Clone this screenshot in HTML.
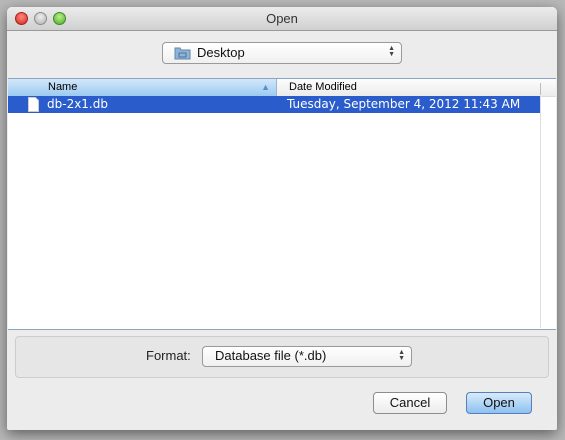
<!DOCTYPE html>
<html><head><style>
body{margin:0;width:565px;height:440px;background:#b9b9b9;position:relative;overflow:hidden;font-family:"Liberation Sans",sans-serif;}
.win{position:absolute;left:7px;top:7px;width:550px;height:423px;background:#ececec;border-radius:5px 5px 2px 2px;box-shadow:0 4px 14px rgba(0,0,0,.5);overflow:hidden;}
.title{height:23px;background:linear-gradient(#ececec,#d0d0d0);border-bottom:1px solid #9a9a9a;text-align:center;font-size:13px;line-height:24px;color:#333;}
.dot{position:absolute;top:5px;width:12px;height:12px;border-radius:50%;}
.pop{position:absolute;background:linear-gradient(#fff,#f0f0f0);border:1px solid #9a9a9a;border-radius:4px;font-size:13px;color:#111;}
.arr{position:absolute;right:6px;top:3px;font-size:7px;line-height:6px;color:#444;}
.list{position:absolute;left:1px;top:71px;width:548px;height:250px;background:#fff;border:1px solid #8aa4c4;border-width:1px 0;}
.btn{position:absolute;top:385px;height:20px;border:1px solid #8d8d8d;border-radius:4px;background:linear-gradient(#fff,#ececec);font-size:13px;text-align:center;line-height:20px;color:#111;}
</style></head><body>
<div class="win">
 <div class="title">Open</div>
 <div class="dot" style="left:8px;background:radial-gradient(circle at 50% 35%,#ff8a80,#d3261c);border:1px solid #a2231a;width:11px;height:11px"></div>
 <div class="dot" style="left:27px;background:radial-gradient(circle at 50% 35%,#eee,#b0b0b0);border:1px solid #8c8c8c;width:11px;height:11px"></div>
 <div class="dot" style="left:46px;background:radial-gradient(circle at 50% 35%,#b8f08a,#4ca92a);border:1px solid #3f8a25;width:11px;height:11px"></div>
 <div class="pop" style="left:155px;top:35px;width:238px;height:20px;">
  <svg style="position:absolute;left:11px;top:3px" width="17" height="14"><path d="M1 2h5l1 2h9v9H1z" fill="#8fb4d6" stroke="#5f87ad"/><rect x="5" y="7" width="7" height="4" fill="none" stroke="#4d7199"/></svg>
  <span style="position:absolute;left:34px;top:2px">Desktop</span>
  <div class="arr">▲<br>▼</div>
 </div>
 <div class="list">
  <div style="position:absolute;left:0;top:0;width:548px;height:17px;background:linear-gradient(#fdfdfd,#ececec);border-bottom:1px solid #ddd"></div>
  <div style="position:absolute;left:0;top:0;width:268px;height:17px;background:linear-gradient(#d2e7fa,#9ccaf1);border-right:1px solid #a0b5cc;font-size:11px;line-height:17px"><span style="margin-left:40px">Name</span><span style="position:absolute;right:6px;top:0;color:#5a8dc8;font-size:9px">▲</span></div>
  <div style="position:absolute;left:281px;top:0;font-size:11px;line-height:17px">Date Modified</div>
  <div style="position:absolute;left:532px;top:4px;width:1px;height:12px;background:#bbb"></div>
  <div style="position:absolute;left:0;top:17px;width:532px;height:17px;background:#2a5ccb;color:#fff;font-family:'DejaVu Sans',sans-serif;font-size:12px;line-height:17px">
   <svg style="position:absolute;left:20px;top:1px" width="11" height="15"><path d="M.5 .5h7l3 3v11H.5z" fill="#fff" stroke="#ccc"/></svg>
   <span style="position:absolute;left:39px">db-2x1.db</span>
   <span style="position:absolute;left:279px">Tuesday, September 4, 2012 11:43 AM</span>
  </div>
  <div style="position:absolute;left:532px;top:17px;width:1px;height:232px;background:#ddd"></div>
 </div>
 <div style="position:absolute;left:8px;top:329px;width:532px;height:40px;background:#e6e6e6;border:1px solid #cdcdcd;border-radius:4px"></div>
 <div style="position:absolute;left:139px;top:341px;font-size:13px;color:#222">Format:</div>
 <div class="pop" style="left:195px;top:339px;width:208px;height:19px;">
  <span style="position:absolute;left:12px;top:1px">Database file (*.db)</span>
  <div class="arr">▲<br>▼</div>
 </div>
 <div class="btn" style="left:366px;width:72px">Cancel</div>
 <div class="btn" style="left:459px;width:64px;border-color:#5a7fb8;background:linear-gradient(#d8ebfb,#8dc1f0)">Open</div>
</div>
</body></html>
